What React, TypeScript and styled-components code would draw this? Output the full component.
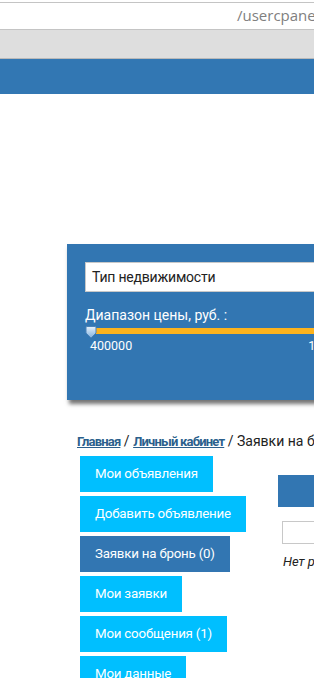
import styled, { createGlobalStyle } from 'styled-components';

const GlobalStyle = createGlobalStyle`
  html, body {
    margin: 0;
    padding: 0;
    background: #fff;
    overflow: hidden;
  }
  body {
    font-family: Roboto, 'Open Sans', sans-serif;
  }
`;

const MENU = [
  { id: 1, title: 'Мои объявления', active: false },
  { id: 2, title: 'Добавить объявление', active: false },
  { id: 3, title: 'Заявки на бронь (0)', active: true },
  { id: 4, title: 'Мои заявки', active: false },
  { id: 5, title: 'Мои сообщения (1)', active: false },
  { id: 6, title: 'Мои данные', active: false },
];

const SliderHandle = () => (
  <svg width="12" height="13" viewBox="0 0 12 13">
    <defs>
      <linearGradient id="hg" x1="0" y1="0" x2="0" y2="1">
        <stop offset="0" stopColor="#e6f1fb" />
        <stop offset="1" stopColor="#7fb1e0" />
      </linearGradient>
    </defs>
    <path d="M1 1.5 Q1 0.5 2 0.5 L10 0.5 Q11 0.5 11 1.5 L11 7 L6 12 L1 7 Z" fill="url(#hg)" stroke="#4a82b8" strokeWidth="1" />
  </svg>
);

const App = () => {
  return (
    <St.Page>
      <GlobalStyle />
      <St.AddressBar>
        <St.Url>/usercpanel</St.Url>
      </St.AddressBar>
      <St.Toolbar />
      <St.Header />

      <St.SearchPanel>
        <St.Select>Тип недвижимости</St.Select>
        <St.RangeLabel>Диапазон цены, руб. :</St.RangeLabel>
        <St.Slider>
          <St.Track />
          <St.Handle>
            <SliderHandle />
          </St.Handle>
        </St.Slider>
        <St.RangeValues>
          <span>400000</span>
          <span>10000000</span>
        </St.RangeValues>
      </St.SearchPanel>

      <St.Breadcrumb>
        <a href="#">Главная</a> / <a href="#">Личный кабинет</a> / Заявки на бронь
      </St.Breadcrumb>

      <St.Content>
        <St.Sidebar>
          {MENU.map(({ id, title, active }) => (
            <St.MenuButton key={id} $active={active}>
              {title}
            </St.MenuButton>
          ))}
        </St.Sidebar>
        <St.Main>
          <St.MainHead />
          <St.Filter />
          <St.Empty>Нет результатов</St.Empty>
        </St.Main>
      </St.Content>
    </St.Page>
  );
};

export default App;

const St = {
  Page: styled.div`
    width: 314px;
    height: 678px;
    overflow: hidden;
  `,
  AddressBar: styled.div`
    height: 26px;
    margin-top: 2px;
    border-top: 1px solid #c4c4c4;
    border-bottom: 1px solid #c4c4c4;
    background: #fff;
    white-space: nowrap;
    overflow: hidden;
  `,
  Url: styled.div`
    padding-left: 237px;
    font-family: 'Open Sans', sans-serif;
    font-size: 15px;
    line-height: 25px;
    color: #808080;
  `,
  Toolbar: styled.div`
    height: 28px;
    background: #dedede;
    border-bottom: 1px solid #b9b9b9;
  `,
  Header: styled.div`
    height: 35px;
    background: #3277b3;
  `,
  SearchPanel: styled.section`
    width: 420px;
    height: 156px;
    box-sizing: border-box;
    margin: 150px 0 0 67px;
    padding: 18px 18px 0 18px;
    background: #3276b2;
    box-shadow: 2px 4px 4px rgba(0, 0, 0, 0.55);
  `,
  Select: styled.div`
    height: 30px;
    box-sizing: border-box;
    border: 1px solid #c8c8c8;
    background: #fff;
    padding-left: 6px;
    font-size: 14px;
    letter-spacing: -0.2px;
    line-height: 28px;
    color: #222;
  `,
  RangeLabel: styled.div`
    margin-top: 13px;
    font-size: 14px;
    line-height: 20px;
    color: #fff;
  `,
  Slider: styled.div`
    position: relative;
    height: 13px;
    margin-top: 1px;
  `,
  Track: styled.div`
    position: absolute;
    left: 3px;
    right: 0;
    top: 2px;
    height: 6px;
    background: #fdb31d;
  `,
  Handle: styled.div`
    position: absolute;
    left: 0;
    top: 0;
    line-height: 0;
  `,
  RangeValues: styled.div`
    display: flex;
    gap: 176px;
    padding-left: 5px;
    white-space: nowrap;
    font-size: 12.5px;
    line-height: 14px;
    color: #fff;
  `,
  Breadcrumb: styled.div`
    height: 20px;
    margin: 31px 0 0 77px;
    white-space: nowrap;
    font-size: 14px;
    line-height: 20px;
    color: #222;

    & > a {
      color: #2b5f8c;
      font-size: 13px;
      font-weight: 700;
      letter-spacing: -0.8px;
      text-decoration: underline;
    }
  `,
  Content: styled.div`
    display: flex;
    margin: 5px 0 0 80px;
  `,
  Sidebar: styled.nav`
    display: flex;
    flex-direction: column;
    align-items: flex-start;
    gap: 4px;
    width: 198px;
    flex-shrink: 0;
  `,
  MenuButton: styled.div<{ $active: boolean }>`
    height: 36px;
    padding: 0 15px;
    box-sizing: border-box;
    background: ${({ $active }) => ($active ? '#3276b2' : '#00bfff')};
    font-size: 13.3px;
    letter-spacing: -0.2px;
    line-height: 36px;
    color: #fff;
    white-space: nowrap;
  `,
  Main: styled.div`
    display: flex;
    flex-direction: column;
    width: 300px;
    flex-shrink: 0;
    padding-top: 19px;
  `,
  MainHead: styled.div`
    height: 32px;
    background: #3276b2;
  `,
  Filter: styled.div`
    height: 23px;
    margin: 14px 0 0 4px;
    box-sizing: border-box;
    border: 1px solid #c8c8c8;
  `,
  Empty: styled.div`
    margin: 9px 0 0 5px;
    font-size: 13px;
    font-style: italic;
    line-height: 18px;
    color: #222;
  `,
};
